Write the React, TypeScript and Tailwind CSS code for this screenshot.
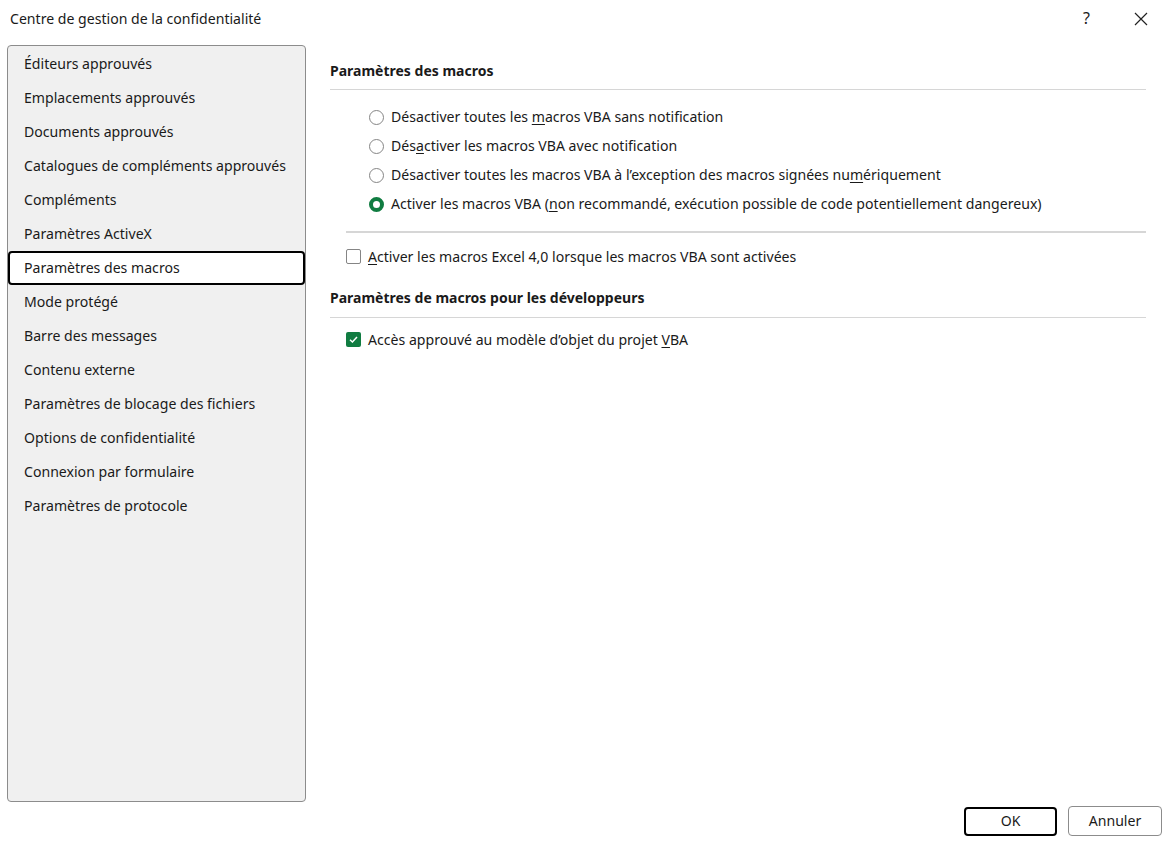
import React from "react";

const items = [
  "Éditeurs approuvés",
  "Emplacements approuvés",
  "Documents approuvés",
  "Catalogues de compléments approuvés",
  "Compléments",
  "Paramètres ActiveX",
  "Paramètres des macros",
  "Mode protégé",
  "Barre des messages",
  "Contenu externe",
  "Paramètres de blocage des fichiers",
  "Options de confidentialité",
  "Connexion par formulaire",
  "Paramètres de protocole",
];

function Radio({ checked }: { checked?: boolean }) {
  if (checked)
    return (
      <span className="w-[15px] h-[15px] rounded-full border-[4px] border-[#107c41] bg-white shrink-0" />
    );
  return <span className="w-[15px] h-[15px] rounded-full border border-[#858585] bg-white shrink-0" />;
}

export default function App() {
  const radios: React.ReactNode[] = [
    <>Désactiver toutes les <u className="underline-offset-2">m</u>acros VBA sans notification</>,
    <>Dés<u className="underline-offset-2">a</u>ctiver les macros VBA avec notification</>,
    <>Désactiver toutes les macros VBA à l’exception des macros signées nu<u className="underline-offset-2">m</u>ériquement</>,
    <>Activer les macros VBA (<u className="underline-offset-2">n</u>on recommandé, exécution possible de code potentiellement dangereux)</>,
  ];
  return (
    <div
      className="w-[1170px] h-[845px] bg-white text-[#1a1a1a] flex flex-col text-[14.1px] overflow-hidden"
      style={{ fontFamily: '"Segoe UI", "Noto Sans", sans-serif' }}
    >
      <div className="h-[36px] flex items-center pl-[10px] pr-[22px] pt-[1px]">
        <span className="flex-1 text-[14.1px]">Centre de gestion de la confidentialité</span>
        <span className="text-[16px] mr-[44px]">?</span>
        <svg width="14" height="14" viewBox="0 0 14 14" className="mt-[1px]">
          <path d="M1 1 L13 13 M13 1 L1 13" stroke="#222" strokeWidth="1.2" />
        </svg>
      </div>
      <div className="flex flex-1 pl-[7px] pt-[9px]">
        <div className="w-[299px] h-[757px] bg-[#f0f0f0] border border-[#8c8c8c] rounded-[4px] flex flex-col pt-[1px]">
          {items.map((t) => {
            const sel = t === "Paramètres des macros";
            return (
              <div
                key={t}
                className={
                  "h-[34px] flex items-center " +
                  (sel ? "bg-white border-2 border-black rounded-[4px] pl-[14px]" : "pl-[16px]")
                }
              >
                {t}
              </div>
            );
          })}
        </div>
        <div className="flex-1 pl-[24px] pr-[24px] pt-[9px]">
          <div className="font-bold text-[14px] h-[36px] pb-[2px] flex items-center border-b border-[#d6d6d6]">
            Paramètres des macros
          </div>
          <div className="flex flex-col pl-[39px] pt-[13px]">
            {radios.map((r, i) => (
              <div key={i} className="h-[29px] flex items-center gap-[7px]">
                <Radio checked={i === 3} />
                <span>{r}</span>
              </div>
            ))}
          </div>
          <div className="ml-[16px] mt-[12px] border-t-2 border-[#d6d6d6]" />
          <div className="h-[34px] mt-[7px] flex items-center gap-[7px] pl-[16px]">
            <span className="w-[15px] h-[15px] border border-[#858585] rounded-[2px] bg-white shrink-0" />
            <span>
              <u className="underline-offset-2">A</u>ctiver les macros Excel 4,0 lorsque les macros VBA sont activées
            </span>
          </div>
          <div className="font-bold text-[14px] h-[44px] flex items-center border-b border-[#d6d6d6] pt-[4px]">
            Paramètres de macros pour les développeurs
          </div>
          <div className="h-[44px] flex items-center gap-[7px] pl-[16px]">
            <span className="w-[15px] h-[15px] rounded-[2px] bg-[#107c41] shrink-0 flex items-center justify-center">
              <svg width="11" height="11" viewBox="0 0 11 11">
                <path d="M2 5.8 L4.4 8 L9 3" stroke="white" strokeWidth="1.5" fill="none" />
              </svg>
            </span>
            <span>
              Accès approuvé au modèle d’objet du projet <u className="underline-offset-2">V</u>BA
            </span>
          </div>
        </div>
      </div>
      <div className="h-[44px] flex items-start justify-end gap-[11px] pr-[8px]">
        <button className="w-[93px] h-[29px] border-2 border-black rounded-[4px] bg-white mt-[5px]">OK</button>
        <button className="w-[94px] h-[30px] border border-[#8c8c8c] rounded-[4px] bg-white mt-[4px]">Annuler</button>
      </div>
    </div>
  );
}
